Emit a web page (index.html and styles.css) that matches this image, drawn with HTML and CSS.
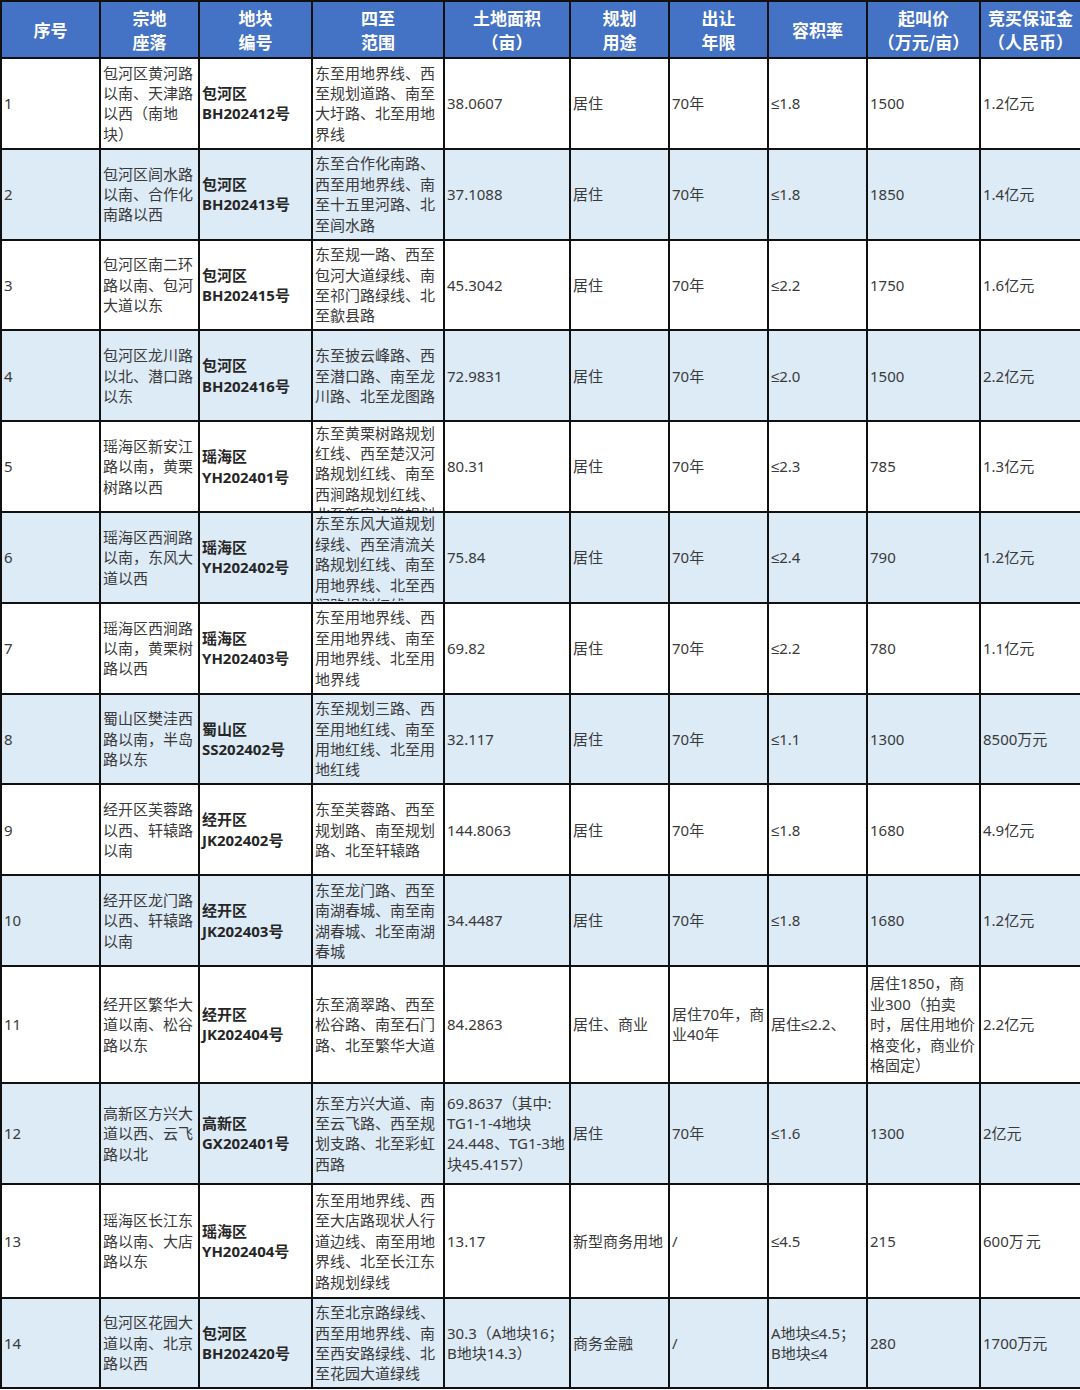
FILE: index.html
```html
<!DOCTYPE html>
<html lang="zh-CN">
<head>
<meta charset="utf-8">
<title>地块出让信息表</title>
<link rel="stylesheet" href="styles.css">
</head>
<body>
<table class="land">
  <colgroup>
    <col class="c1"><col class="c2"><col class="c3"><col class="c4"><col class="c5">
    <col class="c6"><col class="c7"><col class="c8"><col class="c9"><col class="c10">
  </colgroup>
  <thead>
    <tr class="head">
      <th>序号</th>
      <th>宗地<br>座落</th>
      <th>地块<br>编号</th>
      <th>四至<br>范围</th>
      <th>土地面积<br>（亩）</th>
      <th>规划<br>用途</th>
      <th>出让<br>年限</th>
      <th>容积率</th>
      <th>起叫价<br>（万元/亩）</th>
      <th>竞买保证金<br>（人民币）</th>
    </tr>
  </thead>
  <tbody>
    <tr class="r std">
      <td>1</td>
      <td>包河区黄河路以南、天津路以西（南地块）</td>
      <td class="code">包河区<br>BH202412号</td>
      <td>东至用地界线、西至规划道路、南至大圩路、北至用地界线</td>
      <td>38.0607</td><td>居住</td><td>70年</td><td>≤1.8</td><td>1500</td><td>1.2亿元</td>
    </tr>
    <tr class="r std alt">
      <td>2</td>
      <td>包河区闾水路以南、合作化南路以西</td>
      <td class="code">包河区<br>BH202413号</td>
      <td>东至合作化南路、西至用地界线、南至十五里河路、北至闾水路</td>
      <td>37.1088</td><td>居住</td><td>70年</td><td>≤1.8</td><td>1850</td><td>1.4亿元</td>
    </tr>
    <tr class="r std">
      <td>3</td>
      <td>包河区南二环路以南、包河大道以东</td>
      <td class="code">包河区<br>BH202415号</td>
      <td>东至规一路、西至包河大道绿线、南至祁门路绿线、北至歙县路</td>
      <td>45.3042</td><td>居住</td><td>70年</td><td>≤2.2</td><td>1750</td><td>1.6亿元</td>
    </tr>
    <tr class="r std alt">
      <td>4</td>
      <td>包河区龙川路以北、潜口路以东</td>
      <td class="code">包河区<br>BH202416号</td>
      <td>东至披云峰路、西至潜口路、南至龙川路、北至龙图路</td>
      <td>72.9831</td><td>居住</td><td>70年</td><td>≤2.0</td><td>1500</td><td>2.2亿元</td>
    </tr>
    <tr class="r std">
      <td>5</td>
      <td>瑶海区新安江路以南，黄栗树路以西</td>
      <td class="code">瑶海区<br>YH202401号</td>
      <td><div class="clip">东至黄栗树路规划红线、西至楚汉河路规划红线、南至西涧路规划红线、北至新安江路规划红线</div></td>
      <td>80.31</td><td>居住</td><td>70年</td><td>≤2.3</td><td>785</td><td>1.3亿元</td>
    </tr>
    <tr class="r std alt">
      <td>6</td>
      <td>瑶海区西涧路以南，东风大道以西</td>
      <td class="code">瑶海区<br>YH202402号</td>
      <td><div class="clip">东至东风大道规划绿线、西至清流关路规划红线、南至用地界线、北至西涧路规划红线</div></td>
      <td>75.84</td><td>居住</td><td>70年</td><td>≤2.4</td><td>790</td><td>1.2亿元</td>
    </tr>
    <tr class="r std">
      <td>7</td>
      <td>瑶海区西涧路以南，黄栗树路以西</td>
      <td class="code">瑶海区<br>YH202403号</td>
      <td>东至用地界线、西至用地界线、南至用地界线、北至用地界线</td>
      <td>69.82</td><td>居住</td><td>70年</td><td>≤2.2</td><td>780</td><td>1.1亿元</td>
    </tr>
    <tr class="r std alt">
      <td>8</td>
      <td>蜀山区樊洼西路以南，半岛路以东</td>
      <td class="code">蜀山区<br>SS202402号</td>
      <td>东至规划三路、西至用地红线、南至用地红线、北至用地红线</td>
      <td>32.117</td><td>居住</td><td>70年</td><td>≤1.1</td><td>1300</td><td>8500万元</td>
    </tr>
    <tr class="r std">
      <td>9</td>
      <td>经开区芙蓉路以西、轩辕路以南</td>
      <td class="code">经开区<br>JK202402号</td>
      <td>东至芙蓉路、西至规划路、南至规划路、北至轩辕路</td>
      <td>144.8063</td><td>居住</td><td>70年</td><td>≤1.8</td><td>1680</td><td>4.9亿元</td>
    </tr>
    <tr class="r std alt">
      <td>10</td>
      <td>经开区龙门路以西、轩辕路以南</td>
      <td class="code">经开区<br>JK202403号</td>
      <td>东至龙门路、西至南湖春城、南至南湖春城、北至南湖春城</td>
      <td>34.4487</td><td>居住</td><td>70年</td><td>≤1.8</td><td>1680</td><td>1.2亿元</td>
    </tr>
    <tr class="r h117">
      <td>11</td>
      <td>经开区繁华大道以南、松谷路以东</td>
      <td class="code">经开区<br>JK202404号</td>
      <td>东至滴翠路、西至松谷路、南至石门路、北至繁华大道</td>
      <td>84.2863</td><td>居住、商业</td><td>居住70年，商业40年</td><td>居住≤2.2、</td>
      <td>居住1850，商业300（拍卖时，居住用地价格变化，商业价格固定）</td><td>2.2亿元</td>
    </tr>
    <tr class="r h101 alt">
      <td>12</td>
      <td>高新区方兴大道以西、云飞路以北</td>
      <td class="code">高新区<br>GX202401号</td>
      <td>东至方兴大道、南至云飞路、西至规划支路、北至彩虹西路</td>
      <td>69.8637（其中:<br>TG1-1-4地块<br>24.448、TG1-3地<br>块45.4157）</td>
      <td>居住</td><td>70年</td><td>≤1.6</td><td>1300</td><td>2亿元</td>
    </tr>
    <tr class="r h114">
      <td>13</td>
      <td>瑶海区长江东路以南、大店路以东</td>
      <td class="code">瑶海区<br>YH202404号</td>
      <td>东至用地界线、西至大店路现状人行道边线、南至用地界线、北至长江东路规划绿线</td>
      <td>13.17</td><td>新型商务用地</td><td>/</td><td>≤4.5</td><td>215</td>
      <td>600<span class="wide">万元</span></td>
    </tr>
    <tr class="r h90 alt">
      <td>14</td>
      <td>包河区花园大道以南、北京路以西</td>
      <td class="code">包河区<br>BH202420号</td>
      <td>东至北京路绿线、西至用地界线、南至西安路绿线、北至花园大道绿线</td>
      <td>30.3（A地块16；<br>B地块14.3）</td>
      <td>商务金融</td><td>/</td><td>A地块≤4.5；<br>B地块≤4</td><td>280</td><td>1700万元</td>
    </tr>
  </tbody>
</table>
</body>
</html>
```

FILE: styles.css
```css
html, body {
  margin: 0;
  padding: 0;
  background: #ffffff;
}

.land {
  width: 1080px;
  table-layout: fixed;
  border-collapse: collapse;
  font-family: "Noto Sans", "Liberation Sans", "Noto Sans CJK SC", sans-serif;
  font-size: 15px;
  line-height: 20.4px;
  color: #3a3a3a;
}

.c1 { width: 99px; }
.c2 { width: 99px; }
.c3 { width: 113px; }
.c4 { width: 132px; }
.c5 { width: 126px; }
.c6 { width: 99px; }
.c7 { width: 99px; }
.c8 { width: 99px; }
.c9 { width: 113px; }
.c10 { width: 101px; }

.land th,
.land td {
  border: 2px solid #111;
  vertical-align: middle;
  overflow: hidden;
}

.head th {
  height: 55px;
  padding: 0 2px;
  background: #4472c4;
  color: #ffffff;
  font-family: "Noto Sans CJK SC", sans-serif;
  font-weight: 700;
  font-size: 17px;
  line-height: 24px;
  text-align: center;
  white-space: nowrap;
}

.land td {
  padding: 0 1px 0 2px;
  text-align: left;
  word-break: break-all;
}

.r.alt td {
  background: #ddebf7;
}

.std td { height: 88.8px; }
.h117 td { height: 115px; }
.h101 td { height: 99px; }
.h114 td { height: 112px; }
.h90 td { height: 88px; }

.land td.code {
  font-weight: 700;
  color: #262626;
}

.clip {
  max-height: 88px;
  overflow: hidden;
}

.wide {
  letter-spacing: 2px;
}
```
